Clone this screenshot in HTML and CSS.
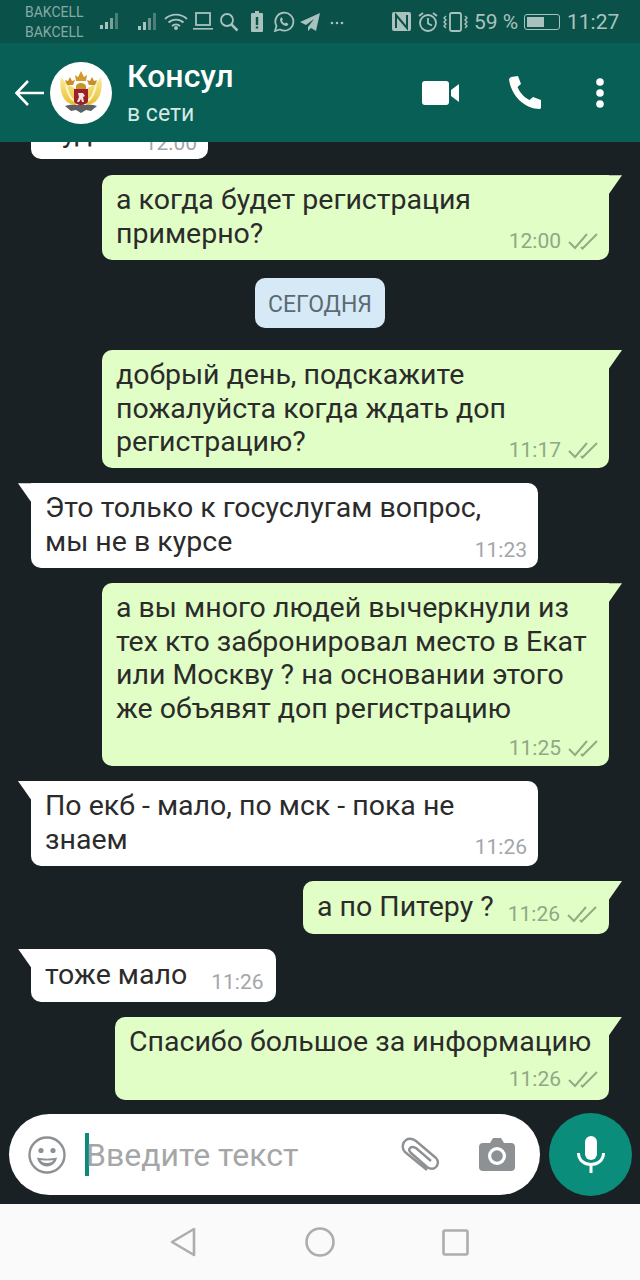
FILE: index.html
```html
<!DOCTYPE html>
<html lang="ru">
<head>
    <meta charset="UTF-8">
    <title>Консул</title>
    <link rel="stylesheet" href="styles.css">
</head>
<body>
<div class="phone">

    <div class="status">
        <div class="carriers">
            <div>BAKCELL</div>
            <div>BAKCELL</div>
        </div>
        <svg class="status-icons" width="246" height="24" viewBox="0 0 246 24">
            <g fill="#a9c2bd">
                <rect x="0" y="15" width="3" height="4"/><rect x="5" y="12" width="3" height="7"/>
                <rect x="10" y="8" width="3" height="11" opacity=".7"/>
                <rect x="15" y="3" width="3" height="16" opacity=".4"/>
                <rect x="38" y="16" width="3" height="4"/><rect x="43" y="12" width="3" height="8"/>
                <rect x="48" y="8" width="3" height="12" opacity=".6"/>
                <rect x="53" y="3" width="3" height="17" opacity=".4"/>
                <circle cx="76" cy="18" r="2"/>
                <rect x="93" y="18" width="20" height="1.600"/>
                <path d="M152 3h3V1h4v2h3a1 1 0 0 1 1 1v17a1 1 0 0 1-1 1h-10a1 1 0 0 1-1-1V4a1 1 0 0 1 1-1z"/>
                <path d="M220 3L200 12l6 3 8-6-6 8 0 4 3-3 5 3z"/>
                <circle cx="232" cy="13" r="1.300"/><circle cx="237" cy="13" r="1.300"/><circle cx="242" cy="13" r="1.300"/>
            </g>
            <path d="M157 7v8M157 16.500v2" stroke="#0a5149" stroke-width="2.400" fill="none"/>
            <g fill="none" stroke="#a9c2bd" stroke-width="1.800">
                <path d="M65 9a16 16 0 0 1 22 0M68.500 12.500a11 11 0 0 1 15 0M72 16a6 6 0 0 1 8 0"/>
                <rect x="96" y="3" width="14" height="12"/>
                <circle cx="127" cy="10" r="6"/>
                <path d="M131.500 14.500l6 6" stroke-width="2.500"/>
                <path d="M175 21l1.500-5a9 9 0 1 1 3.500 3.500z"/>
                <path d="M180 9c0 4 3 7 7 7l1.500-2-2.500-1.500-1 1c-1.500-.5-2.500-1.500-3-3l1-1-1.500-2.500z" fill="#a9c2bd" stroke="none"/>
            </g>
        </svg>
        <svg class="status-right" width="78" height="24" viewBox="0 0 78 24">
            <rect x="0" y="2" width="19" height="19" rx="2" fill="#a9c2bd"/>
            <path d="M4 18V5l11 13V5" fill="none" stroke="#0a5149" stroke-width="2"/>
            <g fill="none" stroke="#a9c2bd" stroke-width="1.800">
                <circle cx="36" cy="13" r="8"/>
                <path d="M36 8v5.500l4 2M27 6l4-3M45 6l-4-3"/>
                <rect x="58" y="3" width="11" height="18" rx="1.500"/>
                <path d="M54 6l-2 2 2 2-2 2 2 2-2 2 2 2M73 6l2 2-2 2 2 2-2 2 2 2-2 2" stroke-width="1.400"/>
            </g>
        </svg>
        <span class="percent">59 %</span>
        <span class="battery"><span class="battery-level"></span></span>
        <span class="clock">11:27</span>
    </div>

    <div class="header">
        <svg class="back" width="32" height="28" viewBox="0 0 32 28">
            <path d="M30 14H3M14 2L2.500 14 14 26" fill="none" stroke="#fff" stroke-width="2.600"/>
        </svg>
        <svg class="avatar" width="62" height="62" viewBox="0 0 62 62">
            <defs>
                <linearGradient id="wing" x1="0" y1="0" x2="0" y2="1">
                    <stop offset="0" stop-color="#f7eea0"/>
                    <stop offset="1" stop-color="#e9bd2c"/>
                </linearGradient>
            </defs>
            <circle cx="31" cy="31" r="31" fill="#fff"/>
            <path d="M26 27C20 24 14 20 11 15c-2 9 0 20 6 25 3 2 6 3 9 3z" fill="url(#wing)"/>
            <path d="M36 27c6-3 12-7 15-12 2 9 0 20-6 25-3 2-6 3-9 3z" fill="url(#wing)"/>
            <path d="M16 22c1 7 3 13 8 17M46 22c-1 7-3 13-8 17" fill="none" stroke="#fbf6c9" stroke-width="2"/>
            <path d="M26 24c1-4 9-4 10 0v4H26z" fill="#c7952f"/>
            <path d="M26 19l-1-6 3 2 3-6 3 6 3-2-1 6z" fill="#d49a2c"/>
            <path d="M17 23l-2-5 3 1 2-4 2 4 3-1-2 5z" fill="#c98d2a"/>
            <path d="M45 23l2-5-3 1-2-4-2 4-3-1 2 5z" fill="#c98d2a"/>
            <path d="M24 27h14v12c0 2-4 4-7 4s-7-2-7-4z" fill="#9c1f2b"/>
            <path d="M28 31h5l2 3-2 1 1 5h-2l-1-3-2 3h-2l2-5z" fill="#f3e6dc"/>
            <path d="M15 44c5-2 10-1 16-1s11-1 16 1l-6 5-5-1-5 3-5-3-5 1z" fill="#5d6163"/>
        </svg>
        <div class="contact">
            <div class="contact-name">Консул</div>
            <div class="contact-state">в сети</div>
        </div>
        <svg class="video" width="37" height="24" viewBox="0 0 37 24">
            <path d="M3 0h21a3 3 0 0 1 3 3v18a3 3 0 0 1-3 3H3a3 3 0 0 1-3-3V3a3 3 0 0 1 3-3zM29 9l8-6v18l-8-6z" fill="#fff"/>
        </svg>
        <svg class="phone-call" width="33" height="33" viewBox="0 0 33 33">
            <path d="M2 1l7-1 3 8-3.500 3c2 5 6 10 12 13l3.500-3 8 3v8l-1 1C16 33 2 20 0 3z" fill="#fff"/>
        </svg>
        <svg class="menu" width="10" height="30" viewBox="0 0 10 30">
            <circle cx="5" cy="4" r="3.800" fill="#fff"/><circle cx="5" cy="15" r="3.800" fill="#fff"/><circle cx="5" cy="26" r="3.800" fill="#fff"/>
        </svg>
    </div>

    <div class="chat">
        <div class="messages">
            <div class="msg in clipped">
                <div class="row"><span class="text">уд</span><span class="time">12:00</span></div>
            </div>

            <div class="msg out">
                <div class="text">а когда будет регистрация<br>примерно?</div>
                <div class="meta"><span class="time">12:00</span><svg class="ticks" width="30" height="18" viewBox="0 0 30 18"><use href="#ticks"/></svg></div>
            </div>

            <div class="day">СЕГОДНЯ</div>

            <div class="msg out">
                <div class="text">добрый день, подскажите<br>пожалуйста когда ждать доп<br>регистрацию?</div>
                <div class="meta"><span class="time">11:17</span><svg class="ticks" width="30" height="18" viewBox="0 0 30 18"><use href="#ticks"/></svg></div>
            </div>

            <div class="msg in">
                <div class="text">Это только к госуслугам вопрос,<br>мы не в курсе</div>
                <div class="meta"><span class="time">11:23</span></div>
            </div>

            <div class="msg out">
                <div class="text">а вы много людей вычеркнули из<br>тех кто забронировал место в Екат<br>или Москву ? на основании этого<br>же объявят доп регистрацию</div>
                <div class="meta below"><span class="time">11:25</span><svg class="ticks" width="30" height="18" viewBox="0 0 30 18"><use href="#ticks"/></svg></div>
            </div>

            <div class="msg in">
                <div class="text">По екб - мало, по мск - пока не<br>знаем</div>
                <div class="meta"><span class="time">11:26</span></div>
            </div>

            <div class="msg out short">
                <div class="row"><span class="text">а по Питеру ?</span><span class="time">11:26</span><svg class="ticks" width="30" height="18" viewBox="0 0 30 18"><use href="#ticks"/></svg></div>
            </div>

            <div class="msg in short">
                <div class="row"><span class="text">тоже мало</span><span class="time">11:26</span></div>
            </div>

            <div class="msg out thanks">
                <div class="text">Спасибо большое за информацию</div>
                <div class="meta low"><span class="time">11:26</span><svg class="ticks" width="30" height="18" viewBox="0 0 30 18"><use href="#ticks"/></svg></div>
            </div>
        </div>

        <div class="composer">
            <div class="input">
                <svg class="smile" width="38" height="38" viewBox="0 0 38 38">
                    <circle cx="19" cy="19" r="17.500" fill="none" stroke="#8e9193" stroke-width="2.400"/>
                    <circle cx="13" cy="14.500" r="2.600" fill="#8e9193"/><circle cx="25" cy="14.500" r="2.600" fill="#8e9193"/>
                    <path d="M9 21.500c6 1.500 14 1.500 20 0-1 5.500-5 9-10 9s-9-3.500-10-9z" fill="#8e9193"/>
                    <path d="M12.500 24c4 .8 9 .8 13 0-1 2-3 3-6.500 3s-5.500-1-6.500-3z" fill="#fff"/>
                </svg>
                <span class="caret"></span>
                <span class="placeholder">Введите текст</span>
                <svg class="clip" width="40" height="36" viewBox="0 0 40 36">
                    <path d="M27 33L5 15C1 11 3 5 6 3c3-2 7-1 10 1l20 17c3 3 2 7 0 9-3 3-6 2-9 0L11 16c-2-2-2-4-1-5 2-2 4-1 6 0l15 13" fill="none" stroke="#8e9193" stroke-width="2.400"/>
                </svg>
                <svg class="camera" width="36" height="33" viewBox="0 0 36 33">
                    <path d="M4 5h7l3-5h8l3 5h7a4 4 0 0 1 4 4v20a4 4 0 0 1-4 4H4a4 4 0 0 1-4-4V9a4 4 0 0 1 4-4z" fill="#8e9193"/>
                    <circle cx="18" cy="18" r="9" fill="#fff"/><circle cx="18" cy="18" r="5.800" fill="#8e9193"/>
                </svg>
            </div>
            <div class="mic">
                <svg width="28" height="37" viewBox="0 0 28 37">
                    <rect x="8" y="0" width="12" height="24" rx="6" fill="#fff"/>
                    <path d="M1.500 17c0 7 5.500 11.500 12.500 11.500S26.500 24 26.500 17M14 28v9" fill="none" stroke="#fff" stroke-width="3"/>
                </svg>
            </div>
        </div>
    </div>

    <div class="navbar">
        <svg width="26" height="30" viewBox="0 0 26 30"><path d="M24 2v26L2 15z" fill="none" stroke="#adadad" stroke-width="2.600" stroke-linejoin="round"/></svg>
        <svg width="30" height="30" viewBox="0 0 30 30"><circle cx="15" cy="15" r="13.500" fill="none" stroke="#adadad" stroke-width="2.600"/></svg>
        <svg class="nav-square" width="27" height="27" viewBox="0 0 27 27"><rect x="1.500" y="1.500" width="24" height="24" rx="1.500" fill="none" stroke="#adadad" stroke-width="2.600"/></svg>
    </div>

    <svg class="defs" width="0" height="0">
        <symbol id="ticks" viewBox="0 0 30 18">
            <path d="M1 10l6 6L19 2M13 15l1.500 1.500L29 2" fill="none" stroke="#92ab84" stroke-width="2"/>
        </symbol>
    </svg>
</div>
</body>
</html>
```

FILE: styles.css
```css
* {
    box-sizing: border-box;
}

html, body {
    margin: 0;
    padding: 0;
}

body {
    font-family: Roboto, "Noto Sans", sans-serif;
}

.phone {
    width: 640px;
    height: 1280px;
    display: flex;
    flex-direction: column;
    overflow: hidden;
    background-color: #1a2125;
}

.defs {
    position: absolute;
}

/* status bar */
.status {
    height: 43px;
    flex-shrink: 0;
    display: flex;
    align-items: center;
    background-color: #0a5149;
    color: #a9c2bd;
}

.carriers {
    width: 100px;
    padding-left: 25px;
    font-size: 14px;
    line-height: 20px;
    color: #86aaa4;
    margin-top: 1px;
}

.status-right {
    margin-left: 46px;
}

.percent {
    margin-left: 4px;
    width: 46px;
    font-size: 21px;
}

.battery {
    margin-left: 4px;
    width: 36px;
    height: 16px;
    border: 1.500px solid #a9c2bd;
    border-radius: 3px;
    padding: 2px;
    display: flex;
}

.battery-level {
    width: 17px;
    background-color: #a9c2bd;
}

.clock {
    margin-left: 7px;
    font-size: 21px;
}

/* header */
.header {
    height: 99px;
    flex-shrink: 0;
    display: flex;
    align-items: center;
    background-color: #075f55;
    color: #fff;
    position: relative;
    z-index: 2;
}

.back {
    margin-left: 14px;
    flex-shrink: 0;
}

.avatar {
    margin-left: 4px;
    flex-shrink: 0;
}

.contact {
    margin-left: 15px;
    width: 295px;
    padding-top: 2px;
}

.contact-name {
    font-size: 32px;
    line-height: 36px;
    font-weight: 500;
}

.contact-state {
    font-size: 23px;
    line-height: 30px;
    margin-top: 5px;
    color: #d5e8e4;
}

.phone-call {
    margin-left: 50px;
}

.menu {
    margin-left: 53px;
}

/* chat */
.chat {
    flex: 1;
    min-height: 0;
    display: flex;
    flex-direction: column;
}

.messages {
    flex: 1;
    min-height: 0;
    overflow: hidden;
    display: flex;
    flex-direction: column;
    padding: 0 31px;
}

.msg {
    flex-shrink: 0;
    position: relative;
    width: 507px;
    padding: 8px 15px 9.600px 14px;
    margin-bottom: 15px;
    border-radius: 10px;
    font-size: 28.500px;
    line-height: 33.600px;
    color: #2b2b2b;
    white-space: nowrap;
}

.msg.in {
    align-self: flex-start;
    background-color: #fff;
    border-top-left-radius: 0;
}

.msg.out {
    align-self: flex-end;
    background-color: #e1fec6;
    border-top-right-radius: 0;
}

.msg.in::before,
.msg.out::before {
    content: "";
    position: absolute;
    top: 0;
    width: 14px;
    height: 20px;
}

.msg.in::before {
    left: -13px;
    background-color: #fff;
    clip-path: polygon(0 0, 100% 0, 100% 100%);
}

.msg.out::before {
    right: -13px;
    background-color: #e1fec6;
    clip-path: polygon(0 0, 100% 0, 0 100%);
}

.msg.clipped {
    width: 177px;
    margin-top: -34px;
    margin-bottom: 16px;
    padding-left: 31px;
    padding-right: 11px;
}

.msg.clipped .row {
    justify-content: space-between;
}

.msg.clipped .time {
    margin-bottom: -5px;
}

.msg.short {
    width: auto;
    padding-top: 9px;
    padding-bottom: 10.400px;
    padding-right: 12px;
}

.msg.short .time {
    margin-bottom: -3px;
}

.msg.in.short .time {
    margin-left: 24px;
}

.msg.thanks {
    width: 494px;
}

.row {
    display: flex;
    align-items: flex-end;
}

.row .time {
    margin-left: 14px;
    flex-shrink: 0;
}

.row .ticks {
    margin-left: 7px;
    margin-bottom: 0;
}

.meta {
    display: flex;
    justify-content: flex-end;
    align-items: center;
    height: 24px;
    margin-top: -21px;
    margin-right: -4px;
    margin-bottom: -3px;
}

.meta.below {
    margin-top: 10px;
    margin-bottom: -3px;
}

.meta.low {
    margin-top: 9px;
    margin-bottom: -1px;
}

.time {
    font-size: 21px;
    line-height: 24px;
    color: #a3a6a8;
}

.out .time {
    color: #8fa886;
}

.ticks {
    margin-left: 7px;
    flex-shrink: 0;
}

.day {
    align-self: center;
    flex-shrink: 0;
    width: 130px;
    height: 50px;
    margin: 3px 0 22px;
    border-radius: 10px;
    background-color: #d5eaf6;
    color: #5c6a72;
    font-size: 23px;
    line-height: 54px;
    text-align: center;
}

/* composer */
.composer {
    flex-shrink: 0;
    display: flex;
    align-items: flex-end;
    height: 104px;
    padding: 0 8px 8px 9px;
}

.input {
    width: 531px;
    height: 81px;
    margin-bottom: 1px;
    display: flex;
    align-items: center;
    background-color: #fff;
    border-radius: 41px;
    padding-left: 19px;
}

.caret {
    width: 4px;
    height: 43px;
    margin-left: 19px;
    background-color: #0b8a78;
    flex-shrink: 0;
}

.placeholder {
    width: 314px;
    margin-left: -3px;
    font-size: 32px;
    color: #a4a6a8;
    white-space: nowrap;
}

.clip {
    flex-shrink: 0;
}

.camera {
    margin-left: 39px;
    flex-shrink: 0;
}

.mic {
    width: 83px;
    height: 83px;
    margin-left: 9px;
    border-radius: 50%;
    background-color: #0a8d7b;
    display: flex;
    align-items: center;
    justify-content: center;
    flex-shrink: 0;
}

/* nav */
.navbar {
    height: 76px;
    flex-shrink: 0;
    display: flex;
    align-items: center;
    padding-left: 170px;
    gap: 109px;
    background-color: #fafafa;
}

.nav-square {
    margin-left: -2px;
}
```
